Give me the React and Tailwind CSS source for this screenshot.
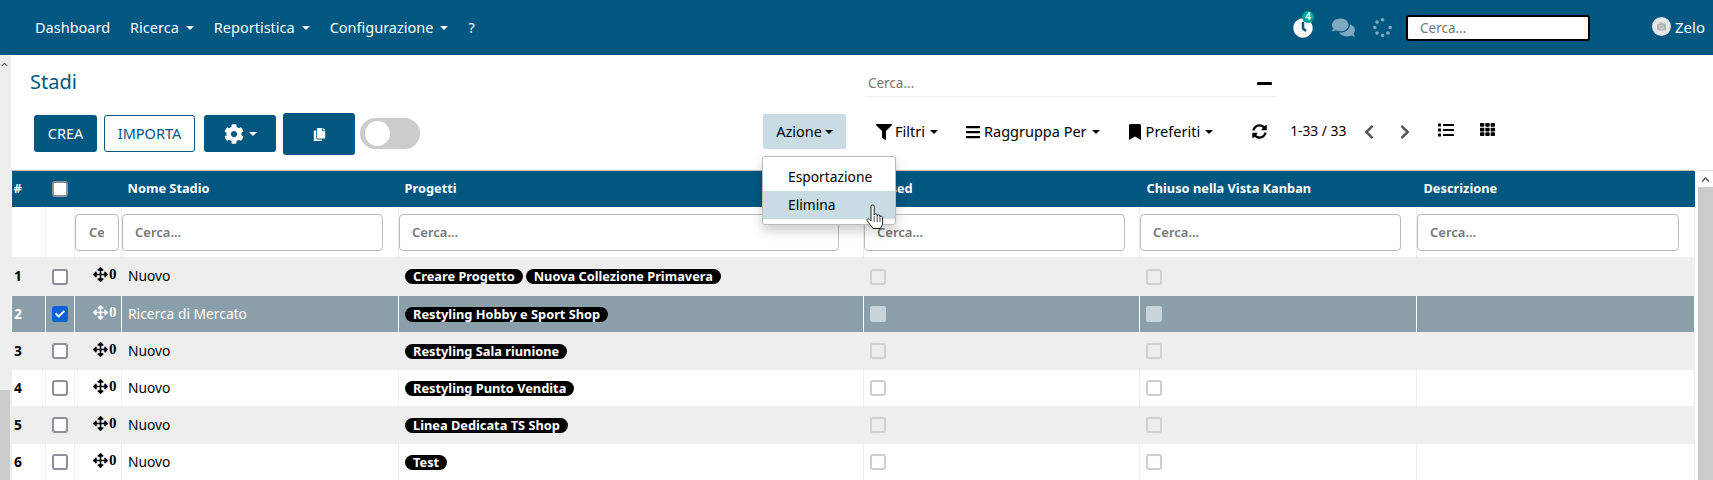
import {
  FaArrowsAlt,
  FaBars,
  FaBookmark,
  FaCamera,
  FaCheck,
  FaChevronLeft,
  FaChevronRight,
  FaChevronUp,
  FaClock,
  FaCog,
  FaComments,
  FaCopy,
  FaFilter,
  FaList,
  FaMinus,
  FaSpinner,
  FaSyncAlt,
  FaTh,
} from "react-icons/fa";

const rows = [
  { id: 1, name: "Nuovo", tags: ["Creare Progetto", "Nuova Collezione Primavera"], h: "h-[39px]", bg: "bg-[#eeeeee]" },
  { id: 2, name: "Ricerca di Mercato", tags: ["Restyling Hobby e Sport Shop"], h: "h-[36px]", bg: "bg-[#8a9fa9]", selected: true },
  { id: 3, name: "Nuovo", tags: ["Restyling Sala riunione"], h: "h-[38px]", bg: "bg-[#eeeeee]" },
  { id: 4, name: "Nuovo", tags: ["Restyling Punto Vendita"], h: "h-[36px]", bg: "bg-white" },
  { id: 5, name: "Nuovo", tags: ["Linea Dedicata TS Shop"], h: "h-[38px]", bg: "bg-[#eeeeee]" },
  { id: 6, name: "Nuovo", tags: ["Test"], h: "h-[36px]", bg: "bg-white" },
];

function Caret({ className = "" }) {
  return <span className={`inline-block border-x-[4px] border-t-[4px] border-x-transparent border-t-current ${className}`} />;
}

function NavItem({ label, caret }) {
  return (
    <span className="flex items-center gap-[7px] text-[14.5px] text-white">
      {label}
      {caret && <Caret />}
    </span>
  );
}

function FilterTool({ icon, label, className = "" }) {
  return (
    <span className={`flex items-center gap-[3px] text-[14.5px] text-black ${className}`}>
      {icon}
      {label}
      <Caret className="ml-[2px]" />
    </span>
  );
}

function Box({ checked, muted }) {
  if (checked) {
    return (
      <span className="flex h-[16px] w-[16px] items-center justify-center rounded-[3px] bg-[#0b62d6] text-white">
        <FaCheck size={10} />
      </span>
    );
  }
  if (muted) return <span className="block h-[16px] w-[16px] rounded-[3px] border-2 border-[#cfcfcf]" />;
  return <span className="block h-[16px] w-[16px] rounded-[3px] border-2 border-[#8f8f9d] bg-white" />;
}

function FilterInput({ className = "w-[261px] px-[12px]" }) {
  return (
    <input
      placeholder="Cerca..."
      className={`block h-[37px] rounded-[4px] border border-[#bbbbbb] bg-white text-[13px] font-semibold placeholder:text-[#777777] ${className}`}
    />
  );
}

export default function App() {
  return (
    <div className="relative flex h-[480px] w-[1713px] flex-col overflow-hidden bg-white font-['Noto_Sans',sans-serif] text-[13.8px]">
      <header className="flex h-[55px] shrink-0 items-center bg-[#005780] pl-[35px]">
        <div className="flex items-center gap-[20px]">
          <NavItem label="Dashboard" />
          <NavItem label="Ricerca" caret />
          <NavItem label="Reportistica" caret />
          <NavItem label="Configurazione" caret />
          <NavItem label="?" />
        </div>
        <div className="ml-auto flex items-center">
          <span className="relative mr-[19px] text-white">
            <FaClock size={20} />
            <span className="absolute -top-[7px] left-[9px] flex h-[12px] w-[12px] items-center justify-center rounded-full bg-[#00a09a] text-[10px] font-bold">4</span>
          </span>
          <FaComments size={23} className="mr-[18px] text-[#7fa9c0]" />
          <FaSpinner size={19} className="mr-[14px] text-[#7fa9c0]" />
          <input
            placeholder="Cerca..."
            className="h-[26px] w-[184px] rounded-[3px] border-2 border-black bg-white px-[12px] text-[13.5px] placeholder:text-[#777777]"
          />
          <span className="-mt-[3px] ml-[62px] flex h-[19px] w-[19px] items-center justify-center rounded-full bg-[#e6e6e6] text-[#b5b5b5]">
            <FaCamera size={9} />
          </span>
          <span className="ml-[4px] mr-[8px] text-[15px] text-white">Zelo</span>
        </div>
      </header>

      <div className="flex min-h-0 flex-1">
        <aside className="flex w-[11px] shrink-0 flex-col bg-[#eeeeee]">
          <FaChevronUp size={7} className="mt-[6px] ml-[1px] text-[#555555]" />
          <div className="mt-auto h-[90px] w-[10px] bg-[#cccccc]" />
        </aside>

        <main className="flex min-w-0 flex-1 flex-col">
          <section className="h-[115px] shrink-0">
            <div className="flex h-[58px]">
              <h1 className="ml-[19px] mt-[13px] text-[20px] leading-[28px] text-[#005780]">Stadi</h1>
              <div className="ml-[787px] mt-[15px] flex h-[27px] w-[414px] items-center justify-between rounded-[3px] border-b border-[#eeeeee] pl-[4px] pr-[5px]">
                <input placeholder="Cerca..." className="w-[300px] bg-transparent text-[13.5px] placeholder:text-[#777777]" />
                <FaMinus size={17} className="text-black" />
              </div>
            </div>
            <div className="flex items-start pl-[23px]">
              <button className="mt-[2px] flex h-[37px] w-[63px] items-center justify-center rounded-[3px] bg-[#005780] text-[14.5px] text-white">CREA</button>
              <button className="ml-[7px] mt-[2px] flex h-[37px] w-[91px] items-center justify-center rounded-[3px] border border-[#005780] text-[14.5px] text-[#005780]">IMPORTA</button>
              <button className="ml-[9px] mt-[2px] flex h-[37px] w-[72px] items-center justify-center gap-[5px] rounded-[3px] bg-[#005780] text-white">
                <FaCog size={20} />
                <Caret />
              </button>
              <button className="ml-[7px] flex h-[42px] w-[72px] items-center justify-center rounded-[3px] bg-[#005780] text-white">
                <FaCopy size={13} />
              </button>
              <span className="ml-[5px] mt-[5px] flex h-[31px] w-[60px] items-center rounded-full bg-[#cccccc] pl-[5px]">
                <span className="h-[25px] w-[25px] rounded-full bg-white" />
              </span>
              <div className="ml-[343px] mt-[1px] flex h-[35px] items-center">
                <button className="flex h-[35px] w-[83px] items-center justify-center gap-[3px] rounded-[2px] bg-[#c9dce4] text-[14.5px] text-black">
                  Azione
                  <Caret />
                </button>
                <FilterTool className="ml-[30px]" icon={<FaFilter size={16} />} label="Filtri" />
                <FilterTool className="ml-[27px]" icon={<FaBars size={16} />} label="Raggruppa Per" />
                <FilterTool className="ml-[27px]" icon={<FaBookmark size={16} />} label="Preferiti" />
                <FaSyncAlt size={15} className="ml-[39px] text-black" />
                <span className="ml-[23px] text-[13.8px] text-black">1-33 / 33</span>
                <FaChevronLeft size={16} className="ml-[15px] text-[#555555]" />
                <FaChevronRight size={16} className="ml-[20px] text-[#555555]" />
                <FaList size={16} className="ml-[25px] -mt-[4px] text-black" />
                <FaTh size={15} className="ml-[26px] -mt-[4px] text-black" />
              </div>
            </div>
          </section>

          <div className="flex min-h-0 flex-1">
            <div className="w-[1683px] shrink-0 border-t border-[#bbbbbb]">
              <table className="w-full table-fixed border-collapse">
                <colgroup>
                  <col className="w-[34px]" />
                  <col className="w-[29px]" />
                  <col className="w-[47px]" />
                  <col className="w-[277px]" />
                  <col className="w-[465px]" />
                  <col className="w-[276px]" />
                  <col className="w-[277px]" />
                  <col className="w-[278px]" />
                </colgroup>
                <thead>
                  <tr className="h-[36px] bg-[#005780] text-left text-[12.8px] font-bold text-white">
                    <th className="pl-[2px]">#</th>
                    <th className="pl-[6px]"><Box /></th>
                    <th />
                    <th className="pl-[6px]">Nome Stadio</th>
                    <th className="pl-[6px]">Progetti</th>
                    <th className="pl-[7px]">Closed</th>
                    <th className="pl-[7px]">Chiuso nella Vista Kanban</th>
                    <th className="pl-[7px]">Descrizione</th>
                  </tr>
                  <tr className="h-[50px]">
                    <th className="border-x border-[#eeeeee]" />
                    <th className="border-x border-[#eeeeee]" />
                    <th className="border-x border-[#eeeeee]"><FilterInput className="w-[44px] pl-[13px] pr-[14px]" /></th>
                    <th className="border-x border-[#eeeeee]"><FilterInput /></th>
                    <th className="border-x border-[#eeeeee]"><FilterInput className="w-[440px] px-[12px]" /></th>
                    <th className="border-x border-[#eeeeee]"><FilterInput /></th>
                    <th className="border-x border-[#eeeeee]"><FilterInput /></th>
                    <th className="border-x border-[#eeeeee]"><FilterInput className="w-[262px] px-[12px]" /></th>
                  </tr>
                </thead>
                <tbody>
                  {rows.map((row) => {
                    const cell = `border-x ${row.selected ? "border-white" : "border-[#eeeeee]"}`;
                    return (
                      <tr key={row.id} className={`${row.h} ${row.bg} ${row.selected ? "text-white" : "text-black"}`}>
                        <td className={`${cell} pl-[2px] font-bold`}>{row.id}</td>
                        <td className={`${cell} pl-[6px]`}><Box checked={row.selected} /></td>
                        <td className={cell}>
                          <span className="-mt-[4px] flex items-center gap-[1px] pl-[18px] font-['Liberation_Serif',serif] text-[15px] font-bold leading-[15px]">
                            <FaArrowsAlt size={15} />0
                          </span>
                        </td>
                        <td className={`${cell} pl-[6px]`}>{row.name}</td>
                        <td className={`${cell} pl-[6px]`}>
                          <span className="flex gap-[3px]">
                            {row.tags.map((tag) => (
                              <span key={tag} className="rounded-full bg-black px-[8px] text-[12.8px] font-bold leading-[15px] text-white">{tag}</span>
                            ))}
                          </span>
                        </td>
                        <td className={`${cell} pl-[6px]`}>
                          {row.selected ? <span className="block h-[16px] w-[16px] rounded-[2px] bg-[#c8d3d9]" /> : <Box muted />}
                        </td>
                        <td className={`${cell} pl-[6px]`}>
                          {row.selected ? <span className="block h-[16px] w-[16px] rounded-[2px] bg-[#c8d3d9]" /> : <Box muted />}
                        </td>
                        <td className={cell} />
                      </tr>
                    );
                  })}
                </tbody>
              </table>
            </div>
            <div className="ml-[4px] flex w-[15px] shrink-0 flex-col">
              <div className="flex h-[17px] items-center justify-center border-t border-[#dddddd]">
                <FaChevronUp size={9} className="text-[#555555]" />
              </div>
              <div className="flex-1 bg-[#cbcbcb]" />
            </div>
          </div>
        </main>
      </div>

      <div className="absolute left-[762px] top-[156px] w-[134px] rounded-[3px] border border-[#bbbbbb] bg-white pb-[5px] pt-[6px] text-[13.8px] text-black shadow-[0_6px_12px_rgba(0,0,0,0.2)]">
        <div className="flex h-[28px] items-center pl-[25px]">Esportazione</div>
        <div className="flex h-[28px] items-center bg-[#c9dce4] pl-[25px]">Elimina</div>
      </div>
      <svg className="absolute left-[866px] top-[204px]" width="18" height="26" viewBox="0 0 18 26">
        <path d="M5 2.5a1.600 1.600 0 0 1 3.200 0V11c0-1.600 3-1.600 3 0v1c0-1.400 2.800-1.400 2.800 0v1c0-1.200 2.600-1.200 2.600.3V19c0 2.500-1.500 3.800-2.200 5.500H7c-1-2-5.500-6.500-6-8-.4-1.400 1.200-2.200 2.300-1.200L5 17Z" fill="#fff" stroke="#222" strokeWidth="1" strokeLinejoin="round" />
        <path d="M8.200 12v6M11.200 12v6M14 13v5" stroke="#222" strokeWidth="0.8" fill="none" />
      </svg>
    </div>
  );
}
